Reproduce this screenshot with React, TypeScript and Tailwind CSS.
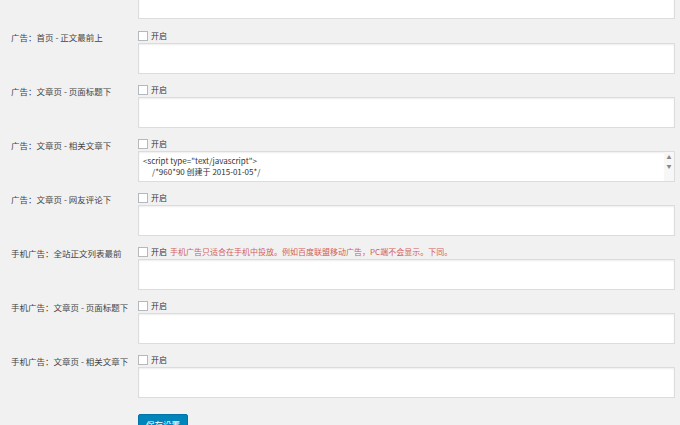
const rows = [
  "广告：首页 - 正文最前上",
  "广告：文章页 - 页面标题下",
  "广告：文章页 - 相关文章下",
  "广告：文章页 - 网友评论下",
  "手机广告：全站正文列表最前",
  "手机广告：文章页 - 页面标题下",
  "手机广告：文章页 - 相关文章下",
];

function Box({ code }: { code?: boolean }) {
  return (
    <div className="relative h-[31px] w-[537px] bg-white border border-[#dcdcdc] shadow-[inset_0_1px_2px_rgba(0,0,0,0.07)] text-[8px] leading-[11px] text-[#333] px-[4px] pt-[3px]">
      {code && (
        <>
          <div>&lt;script type="text/javascript"&gt;</div>
          <div className="pl-[9px]">/*960*90 创建于 2015-01-05*/</div>
          <div className="absolute right-0 top-0 h-full w-[10px] flex flex-col items-center text-[5px] text-[#888] leading-[9px] bg-[#f7f7f7]">
            <span>▲</span>
            <span>▼</span>
          </div>
        </>
      )}
    </div>
  );
}

export default function App() {
  return (
    <div
      className="w-[680px] h-[425px] overflow-hidden bg-[#f1f1f1] text-[#444]"
      style={{ fontFamily: '"Microsoft YaHei","Noto Sans CJK SC",sans-serif' }}
    >
      <div className="pl-[138px] -mt-[12px] mb-[12px]">
        <Box />
      </div>
      {rows.map((r, i) => (
        <div key={r} className="flex pb-[11px]">
          <div className="w-[138px] pl-[11px] text-[8.5px] leading-[11px] pt-[1px]">{r}</div>
          <div className="flex flex-col">
            <div className="flex items-center h-[10px] mb-[2px] text-[8px]">
              <span className="w-[10px] h-[10px] bg-white border border-[#b4b9be] mr-[3px]" />
              <span className="text-[#333]">开启</span>
              {i === 4 && (
                <span className="ml-[3px] text-[#d2605a]">
                  手机广告只适合在手机中投放。例如百度联盟移动广告，PC端不会显示。下同。
                </span>
              )}
            </div>
            <Box code={i === 2} />
          </div>
        </div>
      ))}
      <div className="pl-[138px]">
        <button className="h-[20px] px-[7px] bg-[#0085ba] border border-[#0073aa] rounded-[2px] text-white text-[8.5px]">
          保存设置
        </button>
      </div>
    </div>
  );
}
